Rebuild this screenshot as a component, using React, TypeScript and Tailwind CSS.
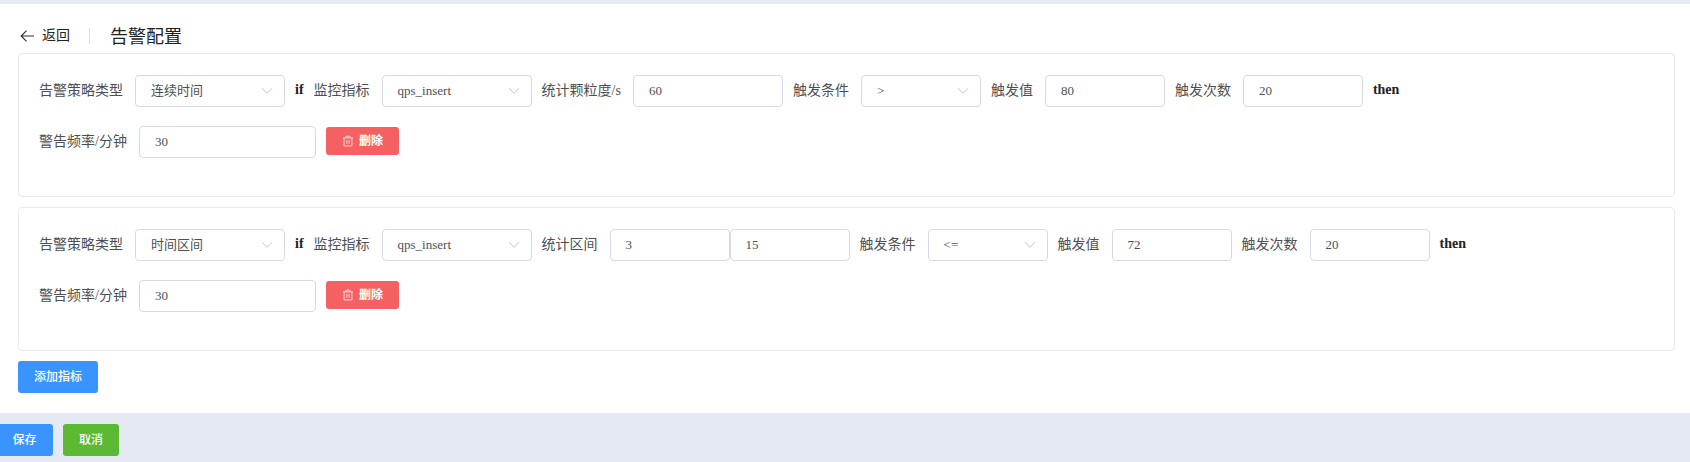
import type { ReactNode } from "react";

const serif = "font-['Liberation_Serif','Noto_Sans_CJK_SC',serif]";
const sans = "font-['Liberation_Sans','Noto_Sans_CJK_SC',sans-serif]";

function Label({ children }: { children: ReactNode }) {
  return <label className="h-8 shrink-0 whitespace-nowrap pr-3 text-[14px] leading-[31px] text-[#4d4f54]">{children}</label>;
}

function Keyword({ children }: { children: ReactNode }) {
  return <b className="mr-2.5 h-8 shrink-0 text-[14px] leading-[30px] text-[#222]">{children}</b>;
}

function Input({ value, width, last = true }: { value: string; width: string; last?: boolean }) {
  return (
    <div className={`flex h-8 shrink-0 items-center rounded-[4px] border border-[#d8d9e6] bg-white px-[15px] text-[13px] text-[#4d4f54] ${width} ${last ? "mr-2.5" : ""}`}>
      <span className="leading-[30px]">{value}</span>
    </div>
  );
}

function Select({ value, width }: { value: string; width: string }) {
  return (
    <div className={`mr-2.5 flex h-8 shrink-0 items-center justify-between rounded-[4px] border border-[#d8d9e6] bg-white pl-[15px] pr-[11px] text-[13px] text-[#4d4f54] ${width}`}>
      <span className="leading-[30px]">{value}</span>
      <svg className="h-3 w-3" viewBox="0 0 12 12" fill="none" stroke="#c3c4ce" strokeWidth="1">
        <path d="M1 3.2 6 8.4 11 3.2" />
      </svg>
    </div>
  );
}

function DeleteButton() {
  return (
    <button className={`mt-px flex h-7 w-[73px] shrink-0 items-center justify-center gap-[5px] rounded-[3px] bg-[#f56162] text-[12px] font-bold leading-7 text-white ${sans}`}>
      <svg className="h-3 w-3" viewBox="0 0 12 12" fill="none" stroke="currentColor" strokeWidth="0.75">
        <path d="M1 2.9h10M4.1 2.9V1.2h3.8v1.7M2.1 2.9v8h7.8v-8M4.9 5v3.8M7.1 5v3.8" />
      </svg>
      <span>删除</span>
    </button>
  );
}

type Rule = {
  type: string;
  metric: string;
  windowLabel: string;
  window: string[];
  operator: string;
  threshold: string;
  count: string;
  frequency: string;
};

const rules: Rule[] = [
  { type: "连续时间", metric: "qps_insert", windowLabel: "统计颗粒度/s", window: ["60"], operator: ">", threshold: "80", count: "20", frequency: "30" },
  { type: "时间区间", metric: "qps_insert", windowLabel: "统计区间", window: ["3", "15"], operator: "<=", threshold: "72", count: "20", frequency: "30" },
];

function RuleCard({ rule }: { rule: Rule }) {
  return (
    <section className="mb-2.5 flex h-36 flex-col gap-[19px] rounded-[4px] border border-[#e8e9f3] px-5 pt-[21px]">
      <div className="flex">
        <Label>告警策略类型</Label>
        <Select value={rule.type} width="w-[150px]" />
        <Keyword>if</Keyword>
        <Label>监控指标</Label>
        <Select value={rule.metric} width="w-[150px]" />
        <Label>{rule.windowLabel}</Label>
        {rule.window.map((value, i) => (
          <Input key={i} value={value} width={rule.window.length > 1 ? "w-[120px]" : "w-[150px]"} last={i === rule.window.length - 1} />
        ))}
        <Label>触发条件</Label>
        <Select value={rule.operator} width="w-[120px]" />
        <Label>触发值</Label>
        <Input value={rule.threshold} width="w-[120px]" />
        <Label>触发次数</Label>
        <Input value={rule.count} width="w-[120px]" />
        <Keyword>then</Keyword>
      </div>
      <div className="flex">
        <Label>警告频率/分钟</Label>
        <Input value={rule.frequency} width="w-[177px]" />
        <DeleteButton />
      </div>
    </section>
  );
}

export default function App() {
  return (
    <div className={`h-[462px] w-full overflow-hidden bg-[#e5e9f2] pt-1 ${serif}`}>
      <main className="h-[409px] bg-white pl-[18px] pr-[15px] pt-5">
        <header className="flex h-[29px] items-start text-[#222]">
          <div className="flex h-6 items-center">
            <svg className="ml-[2px] h-[14px] w-[15px]" viewBox="0 0 15 14" fill="none" stroke="#333" strokeWidth="1.2">
              <path d="M14 7H1.2M6.5 1.7 1.2 7l5.3 5.3" />
            </svg>
            <span className="ml-[7px] text-[14px] leading-6">返回</span>
          </div>
          <i className="ml-[19px] mt-1 h-4 w-px bg-[#dcdfe6]" />
          <h1 className="ml-5 text-[18px] leading-[26px]">告警配置</h1>
        </header>
        {rules.map((rule) => (
          <RuleCard key={rule.type} rule={rule} />
        ))}
        <button className={`h-8 w-20 rounded-[3px] bg-[#3a94ff] text-[12px] font-medium leading-8 text-white ${sans}`}>添加指标</button>
      </main>
      <footer className={`flex gap-2.5 pt-[11px] text-[12px] font-medium leading-8 text-white ${sans}`}>
        <button className="h-8 w-[53px] rounded-r-[3px] bg-[#3a94ff] pr-1">保存</button>
        <button className="h-8 w-14 rounded-[3px] bg-[#5cb933]">取消</button>
      </footer>
    </div>
  );
}
